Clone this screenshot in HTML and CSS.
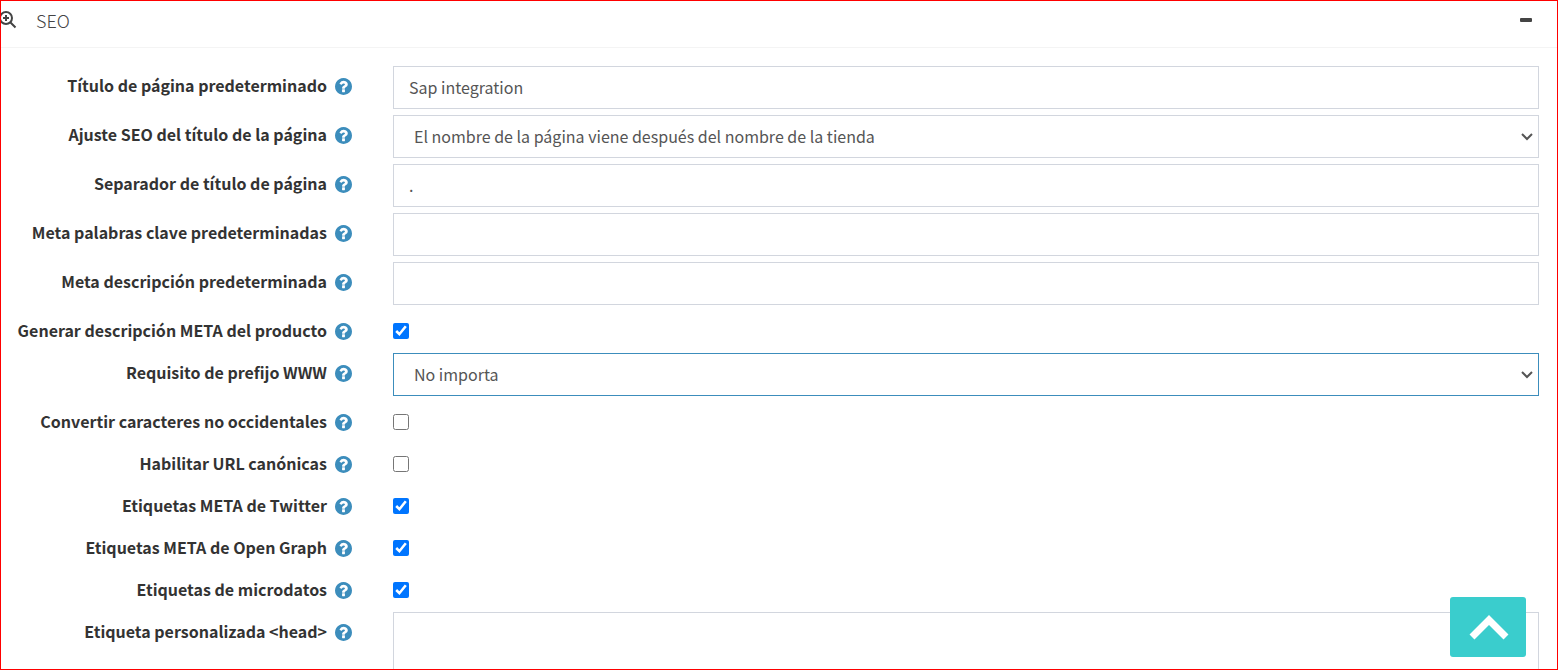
FILE: index.html
```html
<!DOCTYPE html>
<html lang="es">
<head>
<meta charset="utf-8">
<title>SEO</title>
<link rel="stylesheet" href="styles.css">
</head>
<body>
<svg class="sprite" aria-hidden="true">
  <symbol id="help" viewBox="0 0 1536 1536"><path d="M896 1248v-192q0-14-9-23t-23-9H672q-14 0-23 9t-9 23v192q0 14 9 23t23 9h192q14 0 23-9t9-23zm256-672q0-88-55.500-163T958 297t-170-41q-243 0-371 213-15 24 8 42l132 100q7 6 19 6 16 0 25-12 53-68 86-92 34-24 86-24 48 0 85.500 26t37.500 59q0 38-20 61t-68 45q-63 28-115.500 86.500T640 892v36q0 14 9 23t23 9h192q14 0 23-9t9-23q0-19 21.500-49.500T972 829q32-18 49-28.500t46-35 44.500-48 28-60.500 12.500-81zm384 192q0 209-103 385.500T1153.500 1433 768 1536t-385.500-103T103 1153.500 0 768t103-385.500T382.500 103 768 0t385.500 103T1433 382.500 1536 768z"/></symbol>
</svg>
<main class="panel">
  <header class="panel-header">
    <svg class="search-icon" viewBox="0 0 16 18" aria-hidden="true"><circle cx="5" cy="7" r="6"/><path d="M9.500 11.500l5 5M2 7h6M5 4v6"/></svg>
    <h1 class="panel-title">SEO</h1>
    <button class="collapse" type="button" aria-label="Contraer"><svg viewBox="0 0 12 4"><rect width="12" height="4" rx="1"/></svg></button>
  </header>
  <form class="form">
    <div class="row"><div class="caption"><label for="f1">Título de página predeterminado</label><svg class="help"><use href="#help"/></svg></div><input class="control" id="f1" type="text" value="Sap integration"></div>
    <div class="row"><div class="caption"><label for="f2">Ajuste SEO del título de la página</label><svg class="help"><use href="#help"/></svg></div><select class="control" id="f2"><option>El nombre de la página viene después del nombre de la tienda</option></select></div>
    <div class="row"><div class="caption"><label for="f3">Separador de título de página</label><svg class="help"><use href="#help"/></svg></div><input class="control" id="f3" type="text" value="."></div>
    <div class="row"><div class="caption"><label for="f4">Meta palabras clave predeterminadas</label><svg class="help"><use href="#help"/></svg></div><input class="control" id="f4" type="text"></div>
    <div class="row"><div class="caption"><label for="f5">Meta descripción predeterminada</label><svg class="help"><use href="#help"/></svg></div><input class="control" id="f5" type="text"></div>
    <div class="row row-check"><div class="caption"><label for="f6">Generar descripción META del producto</label><svg class="help"><use href="#help"/></svg></div><input class="check" id="f6" type="checkbox" checked></div>
    <div class="row"><div class="caption"><label for="f7">Requisito de prefijo WWW</label><svg class="help"><use href="#help"/></svg></div><select class="control control-active" id="f7"><option>No importa</option></select></div>
    <div class="row row-check"><div class="caption"><label for="f8">Convertir caracteres no occidentales</label><svg class="help"><use href="#help"/></svg></div><input class="check" id="f8" type="checkbox"></div>
    <div class="row row-check"><div class="caption"><label for="f9">Habilitar URL canónicas</label><svg class="help"><use href="#help"/></svg></div><input class="check" id="f9" type="checkbox"></div>
    <div class="row row-check"><div class="caption"><label for="f10">Etiquetas META de Twitter</label><svg class="help"><use href="#help"/></svg></div><input class="check" id="f10" type="checkbox" checked></div>
    <div class="row row-check"><div class="caption"><label for="f11">Etiquetas META de Open Graph</label><svg class="help"><use href="#help"/></svg></div><input class="check" id="f11" type="checkbox" checked></div>
    <div class="row row-check"><div class="caption"><label for="f12">Etiquetas de microdatos</label><svg class="help"><use href="#help"/></svg></div><input class="check" id="f12" type="checkbox" checked></div>
    <div class="row"><div class="caption"><label for="f13">Etiqueta personalizada &lt;head&gt;</label><svg class="help"><use href="#help"/></svg></div><textarea class="control control-area" id="f13"></textarea></div>
  </form>
</main>
<button class="to-top" type="button" aria-label="Volver arriba"><svg viewBox="0 0 40 26"><path d="M4 23L21 6l17 17"/></svg></button>
</body>
</html>
```
FILE: styles.css
```css
* { box-sizing: border-box; }

body {
  margin: 0;
  background: #fff;
  color: #333;
  font: 16px/24px "Noto Sans CJK SC", "Open Sans", sans-serif;
}

.sprite { position: absolute; width: 0; height: 0; }

.panel {
  height: 100vh;
  overflow: hidden;
  border: 1px solid #f00;
}

.panel-header {
  display: flex;
  align-items: center;
  height: 47px;
  padding: 0 25px 8px 0;
  border-bottom: 1px solid #f4f4f4;
}

.search-icon {
  width: 16px;
  height: 18px;
  fill: none;
  stroke: #444;
  stroke-width: 2;
}

.panel-title {
  margin: 0 auto 0 19px;
  color: #444;
  font-size: 18px;
  font-weight: 300;
}

.collapse {
  display: flex;
  padding: 0;
  border: 0;
  background: none;
  fill: #444;
}

.collapse svg { width: 12px; height: 4px; }

.form {
  display: grid;
  gap: 7px;
  padding: 18px 18px 0 0;
}

.row {
  display: grid;
  grid-template-columns: 351px minmax(0, 1fr);
  column-gap: 41px;
  align-items: start;
}

.row-check { height: 35px; }

.caption {
  display: flex;
  justify-content: flex-end;
  align-items: center;
  gap: 8px;
  padding-top: 7px;
  font-weight: 700;
  white-space: nowrap;
}

.help { width: 17px; height: 17px; margin-top: 2px; fill: #3c8dbc; }

.control {
  width: 100%;
  height: 43px;
  margin-bottom: -1px;
  padding: 0 15px 2px;
  border: 1px solid #d2d6de;
  border-radius: 0;
  background: #fff;
  color: #555;
  font: inherit;
}

select.control {
  appearance: none;
  padding: 0 30px 2px 20px;
  background: #fff url("data:image/svg+xml,%3Csvg xmlns='http://www.w3.org/2000/svg' width='12' height='8'%3E%3Cpath d='M1 1l5 5 5-5' fill='none' stroke='%23555' stroke-width='2'/%3E%3C/svg%3E") no-repeat right 5px center;
}

select.control-active { border-color: #3c8dbc; outline: 0; }

.control-area { height: 160px; resize: none; }

.check { width: 16px; height: 16px; margin: 12px 0 0; }

.to-top {
  position: fixed;
  right: 32px;
  bottom: 13px;
  display: flex;
  align-items: center;
  justify-content: center;
  width: 76px;
  height: 60px;
  padding: 0;
  border: 0;
  border-radius: 3px;
  background: #3acdcd;
}

.to-top svg {
  width: 40px;
  height: 26px;
  overflow: visible;
  fill: none;
  stroke: #fff;
  stroke-width: 7;
}
```
